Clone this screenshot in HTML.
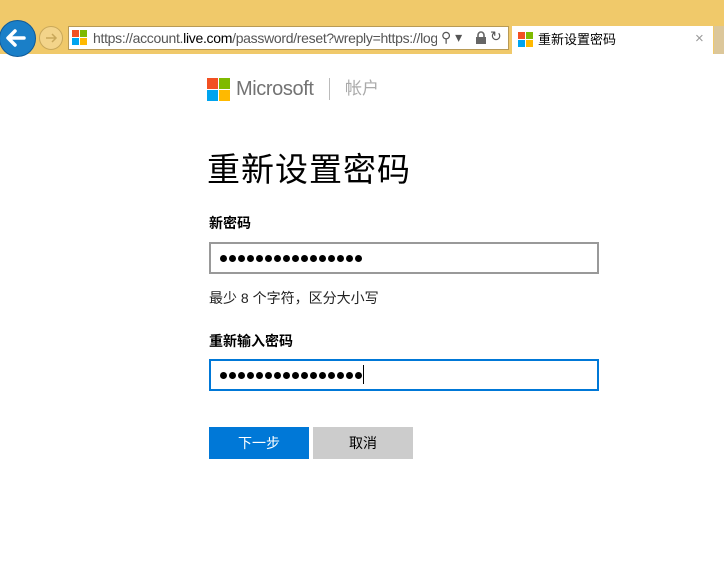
<!DOCTYPE html>
<html><head><meta charset="utf-8"><style>
*{margin:0;padding:0;box-sizing:border-box}
body{width:724px;height:564px;background:#fff;position:relative;overflow:hidden;font-family:"Liberation Sans","Noto Sans CJK SC",sans-serif;color:#000}
.a{position:absolute}
.dot{display:inline-block;width:7px;height:7px;border-radius:50%;background:#000;margin-right:2px}
</style></head><body>
<div class="a" style="left:0;top:0;width:724px;height:54px;background:#f0c96a"></div>
<div class="a" style="left:-1px;top:20px;width:37px;height:37px;border-radius:50%;background:#1a7fc8;border:1px solid #0f5a99"></div>
<svg class="a" style="left:4px;top:27px" width="26" height="22"><path d="M20 11H5M11 4L4 11L11 18" stroke="#fff" stroke-width="3.5" fill="none" stroke-linecap="round" stroke-linejoin="round"/></svg>
<div class="a" style="left:39px;top:26px;width:24px;height:24px;border-radius:50%;border:1.5px solid #c9a85a;background:#f3d48a"></div>
<svg class="a" style="left:43px;top:30px" width="16" height="16"><path d="M3 8H13M9 4L13 8L9 12" stroke="#c9a85a" stroke-width="1.5" fill="none"/></svg>
<div class="a" style="left:68px;top:26px;width:441px;height:24px;background:#fff;border:1px solid #b89a55"></div>
<div class="a" style="left:72px;top:30px;width:7px;height:7px;background:#f25022"></div>
<div class="a" style="left:80px;top:30px;width:7px;height:7px;background:#7fba00"></div>
<div class="a" style="left:72px;top:38px;width:7px;height:7px;background:#00a4ef"></div>
<div class="a" style="left:80px;top:38px;width:7px;height:7px;background:#ffb900"></div>
<div class="a" style="left:93px;top:30px;width:344px;overflow:hidden;white-space:nowrap;font-size:14px;color:#555;line-height:17px;letter-spacing:-0.3px">https://account.<span style="color:#000">live.com</span>/password/reset?wreply=https://login</div>
<div class="a" style="left:441px;top:29px;font-size:14px;color:#555">⚲ ▾</div>
<svg class="a" style="left:475px;top:31px" width="12" height="14"><rect x="1" y="6" width="10" height="7" fill="#666"/><path d="M3 6V4a3 3 0 0 1 6 0v2" stroke="#666" stroke-width="1.6" fill="none"/></svg>
<div class="a" style="left:490px;top:28px;font-size:14px;color:#555">↻</div>
<div class="a" style="left:512px;top:26px;width:201px;height:28px;background:#fff"></div>
<div class="a" style="left:714px;top:26px;width:10px;height:28px;background:#dcc79a"></div>
<div class="a" style="left:518px;top:32px;width:7px;height:7px;background:#f25022"></div>
<div class="a" style="left:526px;top:32px;width:7px;height:7px;background:#7fba00"></div>
<div class="a" style="left:518px;top:40px;width:7px;height:7px;background:#00a4ef"></div>
<div class="a" style="left:526px;top:40px;width:7px;height:7px;background:#ffb900"></div>
<div class="a" style="left:538px;top:32px;font-size:13px;line-height:16px">重新设置密码</div>
<div class="a" style="left:695px;top:30px;font-size:15px;color:#999">×</div>

<div class="a" style="left:207px;top:78px;width:11px;height:11px;background:#f25022"></div>
<div class="a" style="left:219px;top:78px;width:11px;height:11px;background:#7fba00"></div>
<div class="a" style="left:207px;top:90px;width:11px;height:11px;background:#00a4ef"></div>
<div class="a" style="left:219px;top:90px;width:11px;height:11px;background:#ffb900"></div>
<div class="a" style="left:236px;top:77px;font-size:20px;color:#737373;letter-spacing:-0.4px;line-height:24px">Microsoft</div>
<div class="a" style="left:329px;top:78px;width:1px;height:22px;background:#bbb"></div>
<div class="a" style="left:345px;top:79px;font-size:17px;color:#aaa;line-height:20px">帐户</div>

<div class="a" style="left:207px;top:150px;font-size:33px;line-height:40px;letter-spacing:1px">重新设置密码</div>
<div class="a" style="left:209px;top:214px;font-size:14px;font-weight:bold;line-height:18px">新密码</div>
<div class="a" style="left:209px;top:242px;width:390px;height:32px;border:2px solid #999"></div>
<div class="a" style="left:220px;top:255px;line-height:0"><span class="dot"></span><span class="dot"></span><span class="dot"></span><span class="dot"></span><span class="dot"></span><span class="dot"></span><span class="dot"></span><span class="dot"></span><span class="dot"></span><span class="dot"></span><span class="dot"></span><span class="dot"></span><span class="dot"></span><span class="dot"></span><span class="dot"></span><span class="dot"></span></div>
<div class="a" style="left:209px;top:289px;font-size:14px;line-height:18px;color:#222">最少 8 个字符，区分大小写</div>
<div class="a" style="left:209px;top:332px;font-size:14px;font-weight:bold;line-height:18px">重新输入密码</div>
<div class="a" style="left:209px;top:359px;width:390px;height:32px;border:2px solid #0078d7"></div>
<div class="a" style="left:220px;top:372px;line-height:0"><span class="dot"></span><span class="dot"></span><span class="dot"></span><span class="dot"></span><span class="dot"></span><span class="dot"></span><span class="dot"></span><span class="dot"></span><span class="dot"></span><span class="dot"></span><span class="dot"></span><span class="dot"></span><span class="dot"></span><span class="dot"></span><span class="dot"></span><span class="dot"></span></div>
<div class="a" style="left:363px;top:365px;width:1px;height:19px;background:#000"></div>
<div class="a" style="left:209px;top:427px;width:100px;height:32px;background:#0078d7;color:#fff;font-size:14px;text-align:center;line-height:32px">下一步</div>
<div class="a" style="left:313px;top:427px;width:100px;height:32px;background:#ccc;color:#000;font-size:14px;text-align:center;line-height:32px">取消</div>
</body></html>
